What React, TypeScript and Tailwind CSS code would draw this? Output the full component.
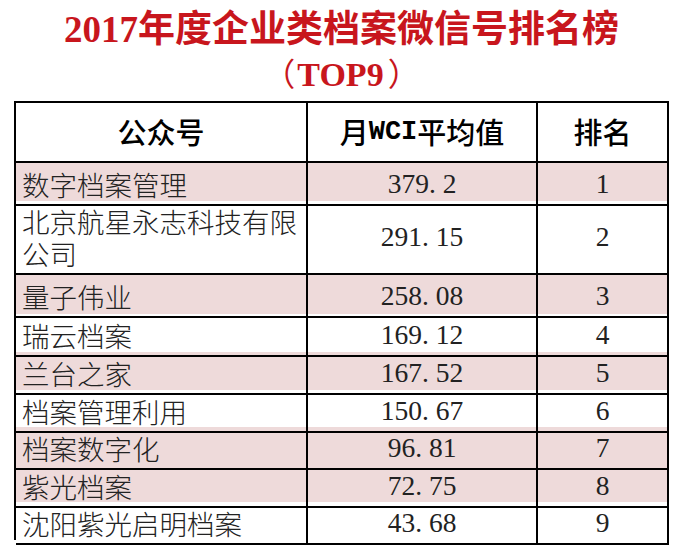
const rows = [
  { name: "数字档案管理", wci: "379.2", rank: "1", pink: true, h: "h-[38px]" },
  { name: "北京航星永志科技有限公司", wci: "291.15", rank: "2", pink: false, h: "h-[74px]" },
  { name: "量子伟业", wci: "258.08", rank: "3", pink: true, h: "h-[39px]" },
  { name: "瑞云档案", wci: "169.12", rank: "4", pink: false, h: "h-[38px]" },
  { name: "兰台之家", wci: "167.52", rank: "5", pink: true, h: "h-[38px]" },
  { name: "档案管理利用", wci: "150.67", rank: "6", pink: false, h: "h-[37px]" },
  { name: "档案数字化", wci: "96.81", rank: "7", pink: true, h: "h-[38px]" },
  { name: "紫光档案", wci: "72.75", rank: "8", pink: true, h: "h-[37px]" },
  { name: "沈阳紫光启明档案", wci: "43.68", rank: "9", pink: false, h: "h-[38px]" },
];

// SimSun-style half-width dot: occupies a full digit cell
function Num({ value }: { value: string }) {
  return (
    <span>
      {value.split("").map((c, i) =>
        c === "." ? (
          <span key={i} className="inline-block w-[0.5em] text-left">
            .
          </span>
        ) : (
          <span key={i}>{c}</span>
        )
      )}
    </span>
  );
}

export default function App() {
  return (
    <div className="w-[683px] h-[553px] bg-white overflow-hidden">
      {/* Title */}
      <div className="pt-[7px] mb-[3px] text-center font-bold text-[#c8161d] [font-family:'Liberation_Serif','Noto_Sans_CJK_SC',serif]">
        <div className="text-[37px] leading-[45px]">2017年度企业类档案微信号排名榜</div>
        <div className="text-[34px] leading-[45px]">
          <span className="font-normal text-[32px]">（</span>
          <span className="ml-[2px] mr-[4px]">TOP9</span>
          <span className="font-normal text-[32px]">）</span>
        </div>
      </div>

      {/* Table */}
      <div className="mx-[14px] border-l-2 border-t-2 border-black">
        <div className="grid grid-cols-[292px_230px_131px] h-[60px] text-[29px] font-medium text-black [font-family:'Noto_Sans_CJK_SC',sans-serif]">
          <div className="flex items-center justify-center border-r-2 border-b-2 border-black">公众号</div>
          <div className="flex items-center justify-center border-r-2 border-b-2 border-black">
            月<span className="[font-family:'Liberation_Mono',monospace] font-bold text-[27px]">WCI</span>平均值
          </div>
          <div className="flex items-center justify-center border-r-2 border-b-2 border-black">排名</div>
        </div>

        {rows.map((r) => (
          <div
            key={r.rank}
            className={`grid grid-cols-[292px_230px_131px] ${r.h} ${r.pink ? "bg-[#eedada]" : "bg-white"} text-[#222]`}
          >
            <div className="flex items-center border-r-2 border-b-2 border-black pl-[6px] pr-1 text-[27.5px] leading-[32px] font-light [font-family:'Noto_Sans_CJK_SC',sans-serif]">
              <span>{r.name}</span>
            </div>
            <div className="flex items-center justify-center border-r-2 border-b-2 border-black text-[27.5px] [font-family:'Liberation_Serif',serif]">
              <Num value={r.wci} />
            </div>
            <div className="flex items-center justify-center border-r-2 border-b-2 border-black text-[27.5px] [font-family:'Liberation_Serif',serif]">
              {r.rank}
            </div>
          </div>
        ))}
      </div>
    </div>
  );
}
